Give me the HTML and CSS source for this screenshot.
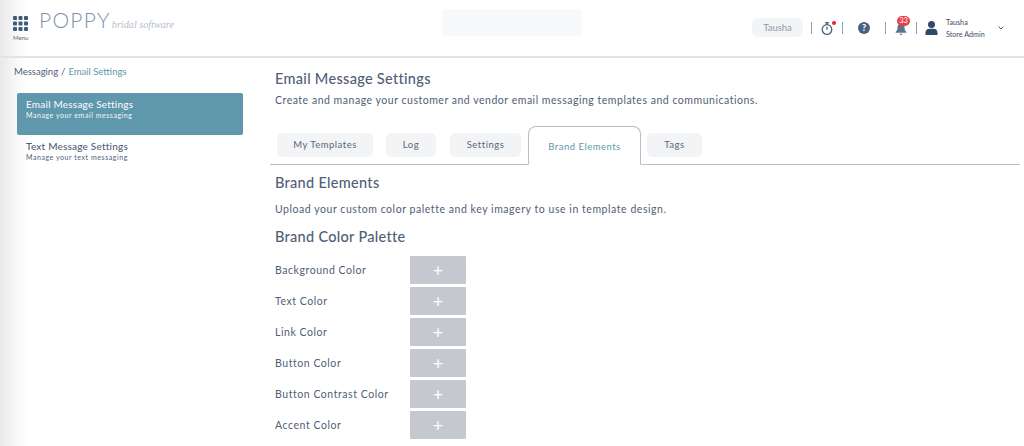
FILE: index.html
```html
<!DOCTYPE html>
<html lang="en">
<head>
    <meta charset="UTF-8">
    <title>Poppy - Email Settings</title>
    <link rel="stylesheet" href="styles.css">
</head>
<body>
    <header class="topbar">
        <div class="menu">
            <svg class="menu-icon" width="15" height="15" viewBox="0 0 15 15">
                <g fill="#3f5a78">
                    <rect x="0" y="0" width="4" height="4" rx="1"/><rect x="5.5" y="0" width="4" height="4" rx="1"/><rect x="11" y="0" width="4" height="4" rx="1"/>
                    <rect x="0" y="5.5" width="4" height="4" rx="1"/><rect x="5.5" y="5.5" width="4" height="4" rx="1"/><rect x="11" y="5.5" width="4" height="4" rx="1"/>
                    <rect x="0" y="11" width="4" height="4" rx="1"/><rect x="5.5" y="11" width="4" height="4" rx="1"/><rect x="11" y="11" width="4" height="4" rx="1"/>
                </g>
            </svg>
            <span>Menu</span>
        </div>
        <div class="logo"><span class="logo-name">POPPY</span><span class="logo-sub">bridal software</span></div>
        <div class="search"></div>
        <div class="tools">
            <div class="user-pill">Tausha</div>
            <i class="sep"></i>
            <div class="tool timer">
                <svg width="12" height="13" viewBox="0 0 14 15" fill="none" stroke="#47627f" stroke-width="1.5">
                    <circle cx="7" cy="8.700" r="5.600"/>
                    <path d="M5 .8h4M7 .8v2.400M7 5.500v3.400"/>
                </svg>
                <b class="dot"></b>
            </div>
            <i class="sep"></i>
            <div class="tool help">?</div>
            <i class="sep"></i>
            <div class="tool bell">
                <svg width="12" height="12" viewBox="0 0 13 14">
                    <path fill="#5a738e" d="M6.500 0c.7 0 1.100.5 1.100 1.100 2 .5 3 2.100 3 4.200 0 2.700.6 3.800 2.200 5.200v.9H.2v-.9c1.600-1.400 2.200-2.500 2.200-5.200 0-2.100 1-3.700 3-4.200C5.400.5 5.800 0 6.500 0zM5 12.400h3c0 .9-.6 1.600-1.500 1.600S5 13.300 5 12.400z"/>
                </svg>
                <b class="badge">33</b>
            </div>
            <i class="sep"></i>
            <div class="account">
                <svg width="13" height="14" viewBox="0 0 12 14">
                    <circle cx="6" cy="3.500" r="3.500" fill="#2f4a68"/>
                    <path fill="#2f4a68" d="M0 14v-2.500C0 9.300 1.700 7.800 4 7.800h4c2.300 0 4 1.500 4 3.700V14z"/>
                </svg>
                <div class="account-text"><span>Tausha</span><span>Store Admin</span></div>
                <svg class="chevron" width="6" height="4" viewBox="0 0 6 4" fill="none" stroke="#47627f" stroke-width="1"><path d="M.5.5 3 3 5.500.5"/></svg>
            </div>
        </div>
    </header>

    <div class="layout">
        <aside class="sidebar">
            <div class="crumbs">Messaging<span class="slash">/</span><a href="#">Email Settings</a></div>
            <a class="side-item active" href="#">
                <strong>Email Message Settings</strong>
                <small>Manage your email messaging</small>
            </a>
            <a class="side-item" href="#">
                <strong>Text Message Settings</strong>
                <small>Manage your text messaging</small>
            </a>
        </aside>

        <main class="content">
            <h1>Email Message Settings</h1>
            <p class="lead">Create and manage your customer and vendor email messaging templates and communications.</p>

            <nav class="tabs">
                <a class="tab tab-templates" href="#">My Templates</a>
                <a class="tab tab-log" href="#">Log</a>
                <a class="tab tab-settings" href="#">Settings</a>
                <a class="tab tab-brand current" href="#">Brand Elements</a>
                <a class="tab tab-tags" href="#">Tags</a>
            </nav>

            <h2 class="brand-title">Brand Elements</h2>
            <p class="brand-text">Upload your custom color palette and key imagery to use in template design.</p>
            <h2 class="palette-title">Brand Color Palette</h2>

            <ul class="palette">
                <li><span>Background Color</span><button>+</button></li>
                <li><span>Text Color</span><button>+</button></li>
                <li><span>Link Color</span><button>+</button></li>
                <li><span>Button Color</span><button>+</button></li>
                <li><span>Button Contrast Color</span><button>+</button></li>
                <li><span>Accent Color</span><button>+</button></li>
            </ul>
        </main>
    </div>
</body>
</html>
```

FILE: styles.css
```css
:root {
    --ink: #505e76;
    --navy: #47627f;
    --teal: #5f97ac;
    --tab-bg: #f2f4f6;
    --rule: #b6bfcc;
}

* {
    box-sizing: border-box;
    margin: 0;
    padding: 0;
}

html, body {
    height: 100%;
    overflow: hidden;
}

body {
    background: linear-gradient(to right, #e9e9e9, #fbfbfb 20px, #fff 28px);
    color: var(--ink);
    font-family: 'Lato', 'Open Sans', sans-serif;
    font-size: 11px;
}

a {
    color: inherit;
    text-decoration: none;
}

.topbar {
    height: 58px;
    border-bottom: 2px solid #e3e3e3;
    display: flex;
    align-items: flex-start;
}

.menu {
    width: 40px;
    padding: 16px 0 0 13px;
    display: flex;
    flex-direction: column;
    font-size: 6px;
    color: #5c6b80;
}

.menu span {
    margin-top: 3px;
}

.logo {
    width: 402px;
    padding-top: 7px;
    display: flex;
    align-items: flex-start;
    color: #7c93a9;
}

.logo-name {
    font-size: 21px;
    font-weight: 300;
    letter-spacing: 1.300px;
    margin-left: -1px;
}

.logo-sub {
    font-family: 'Liberation Serif', serif;
    font-style: italic;
    font-size: 10.200px;
    color: #b3bdca;
    margin: 12px 0 0 1px;
}

.search {
    width: 140px;
    height: 27px;
    margin-top: 9px;
    background: #f7f9fa;
    border-radius: 3px;
}

.tools {
    margin-left: 170px;
    height: 55px;
    display: flex;
    align-items: center;
}

.user-pill {
    width: 51px;
    height: 19px;
    background: var(--tab-bg);
    border-radius: 6px;
    color: #8e98a6;
    font-size: 9.500px;
    line-height: 19px;
    text-align: center;
}

.sep {
    width: 1px;
    height: 12px;
    background: #8fa1b3;
}

.user-pill + .sep { margin-left: 8px; }

.tool {
    position: relative;
    display: flex;
    justify-content: center;
    align-items: center;
}

.timer { width: 30px; margin-top: 1px; }
.bell { width: 30px; margin-top: 2px; }

.dot {
    position: absolute;
    top: -1px;
    right: 6px;
    width: 4px;
    height: 4px;
    background: #e8222e;
    border-radius: 50%;
}

.help {
    width: 12px;
    height: 12px;
    margin: 1px 15px 0;
    background: var(--navy);
    border-radius: 50%;
    color: #fff;
    font-size: 9px;
    font-weight: 900;
    line-height: 12px;
}

.badge {
    position: absolute;
    top: -7px;
    left: 11px;
    width: 13px;
    height: 10px;
    background: #e5404a;
    border-radius: 5px;
    color: #fff;
    font-size: 7.500px;
    font-weight: 400;
    line-height: 10px;
    text-align: center;
}

.account {
    display: flex;
    align-items: center;
    margin-left: 8px;
}

.account-text {
    display: flex;
    flex-direction: column;
    gap: 3px;
    width: 52px;
    margin: 1px 0 0 8px;
    font-size: 7.200px;
    color: #3e4d63;
}

.layout {
    display: flex;
}

.sidebar {
    width: 275px;
    padding: 7px 32px 0 14px;
}

.crumbs {
    font-size: 9.500px;
    line-height: 13px;
}

.crumbs a { color: var(--teal); }
.slash { margin: 0 3px; }

.side-item {
    display: block;
    height: 42px;
    margin-left: 3px;
    padding: 5px 9px;
    border-radius: 2px;
    letter-spacing: .2px;
}

.side-item.active {
    margin-top: 15px;
    background: var(--teal);
    color: #f4f8fa;
}

.side-item strong {
    display: block;
    font-size: 10px;
    font-weight: 500;
    line-height: 13px;
}

.side-item small {
    display: block;
    font-size: 7px;
    letter-spacing: .55px;
    line-height: 9px;
}

.content {
    flex: 1;
    padding: 12px 4px 0 0;
}

h1, h2 {
    font-size: 14.500px;
    font-weight: 500;
    line-height: 18px;
    letter-spacing: .3px;
}

.lead, .brand-text {
    font-size: 10.500px;
    line-height: 14px;
}

.lead {
    margin-top: 5px;
    letter-spacing: .52px;
}

.tabs {
    display: flex;
    align-items: flex-start;
    height: 39px;
    margin: 19px 0 0 -5px;
    padding-left: 7px;
    border-bottom: 1px solid var(--rule);
}

.tab {
    height: 24px;
    margin-top: 7px;
    background: var(--tab-bg);
    border-radius: 5px;
    font-size: 9.500px;
    line-height: 24px;
    letter-spacing: .5px;
    text-align: center;
    color: #5b6779;
}

.tab-templates { width: 96px; margin-right: 13px; }
.tab-log { width: 50px; margin-right: 14px; }
.tab-settings { width: 71px; margin-right: 7px; }
.tab-tags { width: 55px; margin-left: 6px; }

.tab.current {
    width: 113px;
    height: 39px;
    margin-top: 0;
    background: #fff;
    border: 1px solid var(--rule);
    border-bottom: 1px solid #fff;
    border-radius: 8px 8px 0 0;
    color: var(--teal);
    line-height: 40px;
}

.brand-title {
    margin-top: 9px;
}

.brand-text {
    margin-top: 10px;
    letter-spacing: .55px;
}

.palette-title {
    margin-top: 12px;
}

.palette {
    list-style: none;
    margin-top: 8px;
}

.palette li {
    display: flex;
    align-items: center;
    height: 31px;
    font-size: 10.500px;
    letter-spacing: .55px;
}

.palette span {
    width: 135px;
}

.palette button {
    width: 56px;
    height: 28px;
    border: 0;
    border-radius: 1px;
    background: #c5c8cf;
    color: #fff;
    font-family: inherit;
    font-size: 18px;
    font-weight: 400;
    line-height: 28px;
}
```
